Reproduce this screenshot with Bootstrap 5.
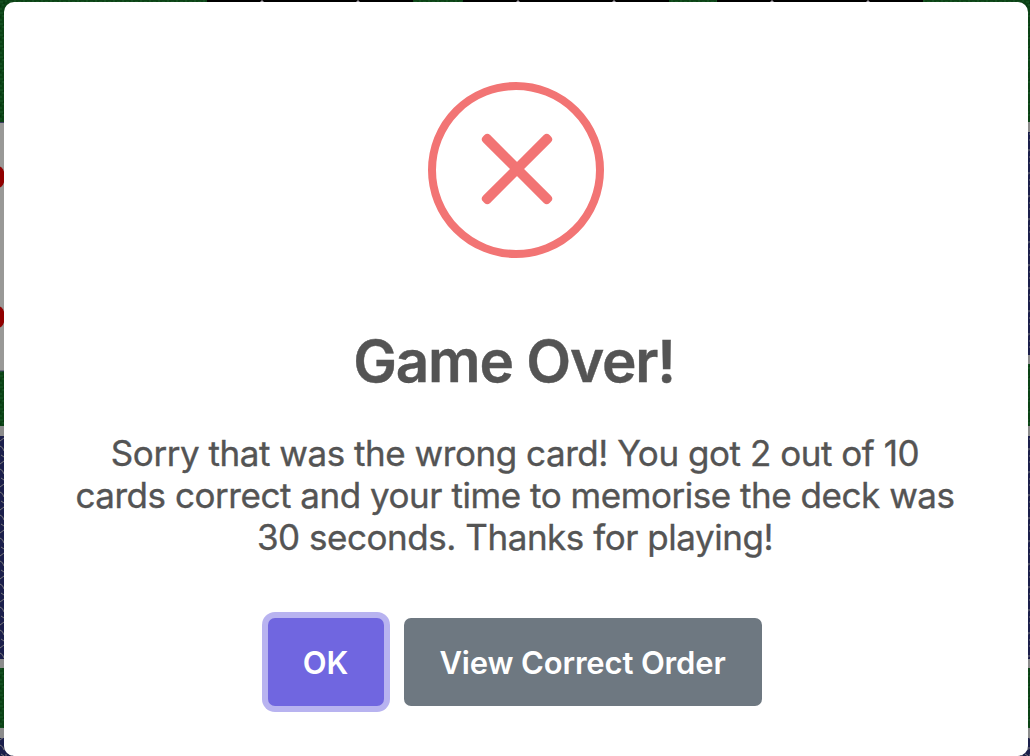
<!DOCTYPE html>
<html lang="en">
<head>
<meta charset="utf-8">
<meta name="viewport" content="width=device-width, initial-scale=1">
<title>Game Over!</title>
<link href="https://cdn.jsdelivr.net/npm/bootstrap@5.3.0/dist/css/bootstrap.min.css" rel="stylesheet">
<style>
body { background: #083c10; font-family: Inter, "Liberation Sans", sans-serif; }
.table-felt { z-index: 0; }
.popup { z-index: 1; width: 1024px; height: 754px; margin: 2px 0 0 4px; border: 0; border-radius: 10px; color: #545454; }
.error-icon { width: 176px; height: 176px; margin-top: 80px; }
.popup-title { font-size: 58.4px; line-height: 70px; font-weight: 600; margin: 68px 4px 0 0; letter-spacing: -1.2px; -webkit-text-stroke: .4px #545454; }
.popup-text { font-size: 35px; line-height: 42px; font-weight: 400; letter-spacing: -.46px; -webkit-text-stroke: .35px #545454; margin: 36px 2px 0 0; }
.popup-actions { margin: 60px 3px 0 0; gap: 20px; }
.popup-btn { height: 88px; border: 0; border-radius: 7px; font-size: 31px; font-weight: 560; letter-spacing: -.15px; padding: 2px 0 0; color: #fff; white-space: nowrap; }
.btn-ok { width: 116px; background: #7066e0; box-shadow: 0 0 0 6px #b8b3f0; }
.btn-order { width: 358px; background: #6e7881; }
</style>
</head>
<body class="vh-100 overflow-hidden position-relative">
<svg class="table-felt position-absolute top-0 start-0" width="1030" height="756" aria-hidden="true">
  <defs>
    <pattern id="felt" width="9" height="11" patternUnits="userSpaceOnUse">
      <rect width="9" height="11" fill="#0b4215"/>
      <path d="M0 2h3M5 1h2M2 5h2M7 7h2M0 9h2" stroke="#1a5a28"/>
      <path d="M3 3h2M0 6h1M5 9h2" stroke="#032e0b"/>
    </pattern>
    <pattern id="back" width="8" height="23" patternUnits="userSpaceOnUse">
      <rect width="8" height="23" fill="#1b1f4b"/>
      <path d="M0 4l4 -3M0 9q3 1 4 5M1 18l3 2M5 2h3M4 12h3M5 19h2" stroke="#77777a" fill="none"/>
    </pattern>
  </defs>
  <rect width="1030" height="756" fill="url(#felt)"/>
  <path d="M207 0H413V4H207zM463 0H669V4H463zM717 0H923V4H717z" fill="#000"/>
  <path d="M260 2l2-2 2 2zM356 2l2-2 2 2zM516 2l2-2 2 2zM612 2l2-2 2 2zM770 2l2-2 2 2zM866 2l2-2 2 2z" fill="#a5a0a8"/>
  <rect y="122" width="10" height="249" fill="#999997"/>
  <path d="M0 122.5h10M0 371h10" stroke="#3d3d63"/>
  <ellipse cx="-2" cy="177" rx="7" ry="11" fill="#900000"/>
  <ellipse cx="-2" cy="317" rx="7" ry="11" fill="#900000"/>
  <path d="M0 426h10v242H0zM0 728h24v28H0zM1020 122h10v242h-10zM1020 426h10v242h-10zM1010 728h20v28h-20z" fill="#8c8c8c"/>
  <path d="M0 436h10v223H0zM0 738h24v18H0zM1020 132h10v223h-10zM1020 436h10v223h-10zM1010 738h20v18h-20z" fill="url(#back)"/>
</svg>
<main class="popup card position-relative d-flex flex-column align-items-center text-center" role="dialog" aria-labelledby="popup-title">
  <svg class="error-icon" viewBox="0 0 176 176" aria-hidden="true">
    <circle cx="88" cy="88" r="84" fill="none" stroke="#f27474" stroke-width="8"/>
    <g fill="#f27474">
      <rect x="42" y="82" width="94" height="10" rx="4" transform="rotate(45 89 87)"/>
      <rect x="42" y="82" width="94" height="10" rx="4" transform="rotate(-45 89 87)"/>
    </g>
  </svg>
  <h2 class="popup-title" id="popup-title">Game Over!</h2>
  <p class="popup-text">Sorry that was the wrong card! You got 2 out of 10<br>cards correct and your time to memorise the deck was<br>30 seconds. Thanks for playing!</p>
  <div class="popup-actions d-flex justify-content-center">
    <button type="button" class="btn popup-btn btn-ok">OK</button>
    <button type="button" class="btn popup-btn btn-order">View Correct Order</button>
  </div>
</main>
<script src="https://cdn.jsdelivr.net/npm/bootstrap@5.3.0/dist/js/bootstrap.bundle.min.js"></script>
</body>
</html>
